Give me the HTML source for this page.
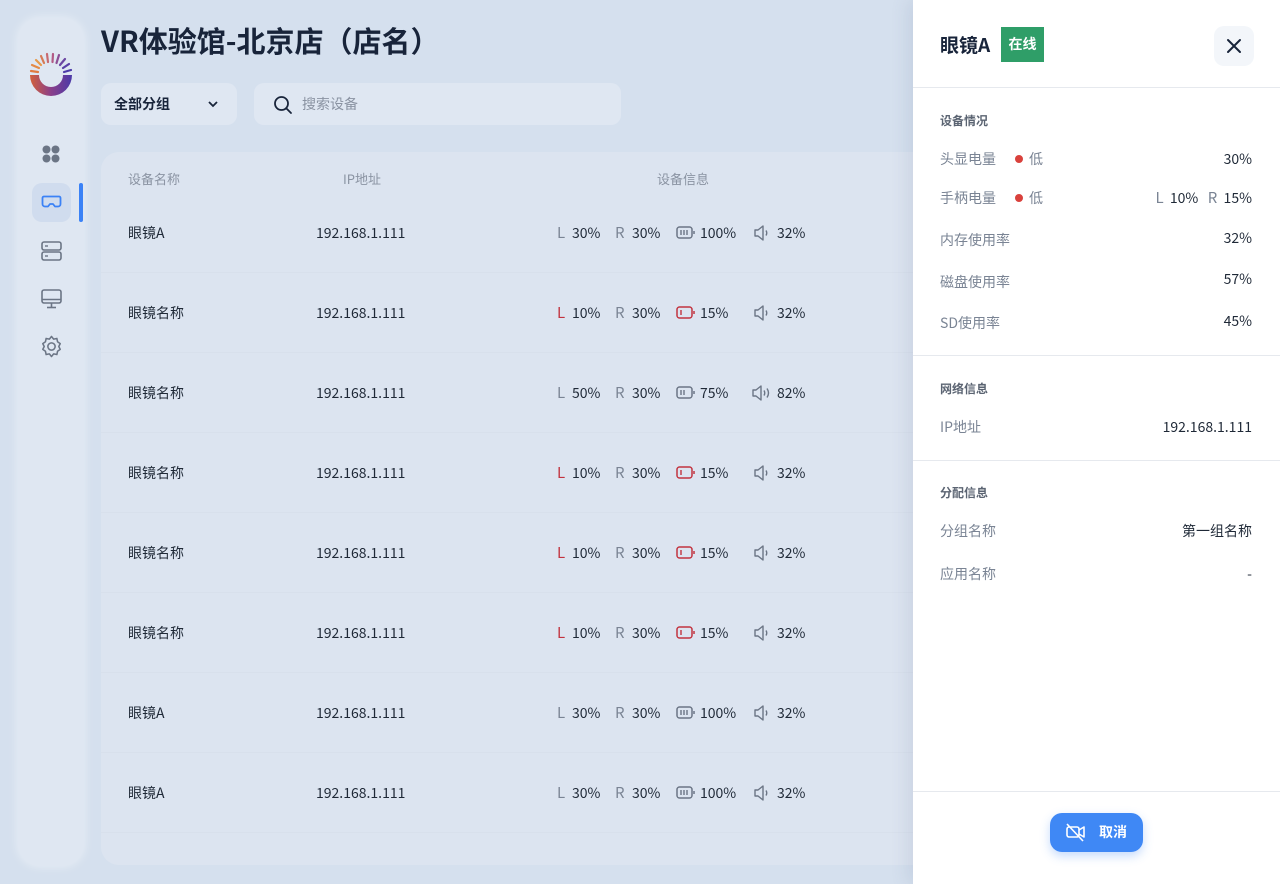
<!DOCTYPE html>
<html><head><meta charset="utf-8"><style>
*{margin:0;padding:0;box-sizing:border-box}
body{width:1280px;height:884px;overflow:hidden;background:#d5e0ee;font-family:"Noto Sans CJK SC","Liberation Sans",sans-serif;color:#1f2937;position:relative}
.abs{position:absolute}
.side{left:18px;top:18px;width:66px;height:848px;border-radius:22px;background:#dfe7f2;box-shadow:0 0 10px rgba(255,255,255,.5)}
.card{left:101px;top:152px;width:830px;height:713px;border-radius:18px;background:#dce4f0}
.t{position:absolute;font-size:14px;line-height:20px;white-space:nowrap}
.g{color:#7a8494}
.red{color:#c2333f}
.panel{left:913px;top:0;width:367px;height:884px;background:#fff;box-shadow:-6px 0 16px rgba(80,100,140,.12)}
.lbl{position:absolute;left:27px;font-size:14px;color:#7a8494;line-height:20px}
.val{position:absolute;right:28px;font-size:14px;color:#1f2937;line-height:20px}
.sec{position:absolute;left:27px;font-size:12px;font-weight:700;color:#5b6472}
.hr{position:absolute;left:0;width:367px;height:1px;background:#e6e9ee}
.dot{display:inline-block;width:8px;height:8px;border-radius:50%;background:#d9413c;margin-right:6px;vertical-align:1px}
</style></head><body>
<div class="abs side"></div>
<svg class="abs" style="left:28px;top:52px" width="46" height="46" viewBox="0 0 46 46">
<defs><linearGradient id="lg" x1="0" x2="1"><stop offset="0" stop-color="#d2603a"/><stop offset=".5" stop-color="#8a3f8a"/><stop offset="1" stop-color="#4b3aa8"/></linearGradient></defs>
<path d="M2 23 A21 21 0 0 0 44 23 L35 23 A12 12 0 0 1 11 23 Z" fill="url(#lg)"/>
<g stroke-width="2.2" stroke-linecap="round">
<line x1="3" y1="19" x2="10" y2="20" stroke="#e07a40"/><line x1="4" y1="13" x2="11" y2="16" stroke="#e48a45"/><line x1="8" y1="8" x2="13" y2="13" stroke="#e79a4a"/><line x1="13" y1="4" x2="16" y2="11" stroke="#d67a55"/><line x1="19" y1="2" x2="20" y2="10" stroke="#c86a70"/><line x1="25" y1="2" x2="24.5" y2="10" stroke="#b25a85"/><line x1="31" y1="3" x2="28.5" y2="11" stroke="#8d4f95"/><line x1="37" y1="7" x2="32" y2="13" stroke="#6c47a3"/><line x1="41" y1="12" x2="35" y2="16" stroke="#5a40a8"/><line x1="43" y1="18" x2="36" y2="20" stroke="#4b3aa8"/>
</g></svg>
<svg class="abs" style="left:42px;top:145px" width="18" height="18"><circle cx="4.5" cy="4.5" r="4" fill="#6b7585"/><circle cx="13.5" cy="4.5" r="4" fill="#6b7585"/><circle cx="4.5" cy="13.5" r="4" fill="#6b7585"/><circle cx="13.5" cy="13.5" r="4" fill="#6b7585"/></svg>
<div class="abs" style="left:32px;top:183px;width:39px;height:39px;border-radius:10px;background:#d0dcee"></div>
<div class="abs" style="left:79px;top:183px;width:4px;height:39px;border-radius:2px;background:#3b82f6"></div>
<svg class="abs" style="left:41px;top:195px" width="21" height="14" viewBox="0 0 21 14"><path d="M3 1.5h15a1.5 1.5 0 0 1 1.5 1.5v6a2.5 2.5 0 0 1-2.5 2.5h-3l-2-2.5h-3l-2 2.5h-3A2.5 2.5 0 0 1 1.5 9V3A1.5 1.5 0 0 1 3 1.5z" fill="none" stroke="#3b82f6" stroke-width="1.8" stroke-linejoin="round"/></svg>
<svg class="abs" style="left:41px;top:241px" width="21" height="20"><rect x="1" y="1" width="19" height="8" rx="2" fill="none" stroke="#6b7585" stroke-width="1.6"/><rect x="1" y="11" width="19" height="8" rx="2" fill="none" stroke="#6b7585" stroke-width="1.6"/><line x1="4" y1="5" x2="7" y2="5" stroke="#6b7585" stroke-width="1.4"/><line x1="4" y1="15" x2="7" y2="15" stroke="#6b7585" stroke-width="1.4"/></svg>
<svg class="abs" style="left:41px;top:289px" width="21" height="20"><rect x="1" y="1" width="19" height="13" rx="2" fill="none" stroke="#6b7585" stroke-width="1.6"/><line x1="1" y1="10.5" x2="20" y2="10.5" stroke="#6b7585" stroke-width="1.4"/><line x1="10.5" y1="14" x2="10.5" y2="18" stroke="#6b7585" stroke-width="1.6"/><line x1="6" y1="18.5" x2="15" y2="18.5" stroke="#6b7585" stroke-width="1.6"/></svg>
<svg class="abs" style="left:40px;top:335px" width="23" height="23" viewBox="0 0 24 24"><path d="M12 1.5l2.2 2.8 3.4-.7.7 3.4 2.8 2L19.6 12l1.5 3-2.8 2-.7 3.4-3.4-.7L12 22.5l-2.2-2.8-3.4.7-.7-3.4-2.8-2L4.4 12 2.9 9l2.8-2 .7-3.4 3.4.7z" fill="none" stroke="#6b7585" stroke-width="1.6" stroke-linejoin="round"/><circle cx="12" cy="12" r="3.8" fill="none" stroke="#6b7585" stroke-width="1.6"/></svg>

<div class="t" style="left:101px;top:20px;font-size:29px;line-height:40px;font-weight:700;color:#18243a">VR体验馆-北京店（店名）</div>
<div class="abs" style="left:101px;top:83px;width:136px;height:42px;border-radius:10px;background:#dfe7f2"></div>
<div class="t" style="left:114px;top:94px;font-weight:700;color:#18243a">全部分组</div>
<svg class="abs" style="left:207px;top:99px" width="12" height="10"><path d="M2 3l4 4 4-4" fill="none" stroke="#18243a" stroke-width="1.8"/></svg>
<div class="abs" style="left:254px;top:83px;width:367px;height:42px;border-radius:10px;background:#dfe7f2"></div>
<svg class="abs" style="left:273px;top:95px" width="20" height="20"><circle cx="8.5" cy="8.5" r="6.5" fill="none" stroke="#18243a" stroke-width="1.8"/><line x1="13.5" y1="13.5" x2="18" y2="18" stroke="#18243a" stroke-width="1.8" stroke-linecap="round"/></svg>
<div class="t g" style="left:302px;top:94px;color:#8a93a2">搜索设备</div>

<div class="abs card"></div>
<div class="t g" style="left:128px;top:169px;font-size:13px;color:#8a93a2">设备名称</div>
<div class="t g" style="left:343px;top:169px;font-size:13px;color:#8a93a2">IP地址</div>
<div class="t g" style="left:657px;top:169px;font-size:13px;color:#8a93a2">设备信息</div>

<div id="rows"></div>
<script>
var d=[["眼镜A",0,"30%","100%",3,0],["眼镜名称",1,"10%","15%",1,0],["眼镜名称",0,"50%","75%",2,1],["眼镜名称",1,"10%","15%",1,0],["眼镜名称",1,"10%","15%",1,0],["眼镜名称",1,"10%","15%",1,0],["眼镜A",0,"30%","100%",3,0],["眼镜A",0,"30%","100%",3,0]];
var h="";
d.forEach(function(r,i){var y=223+i*80;var low=r[1];var bc=low?"#c2333f":"#6b7585";
h+='<div class="abs" style="left:101px;top:'+(y+49)+'px;width:812px;height:1px;background:#d8e0ec"></div>';
h+='<div class="t" style="left:128px;top:'+y+'px">'+r[0]+'</div>';
h+='<div class="t" style="left:316px;top:'+y+'px">192.168.1.111</div>';
h+='<div class="t '+(low?'red':'g')+'" style="left:557px;top:'+y+'px;font-size:15px">L</div>';
h+='<div class="t" style="left:572px;top:'+y+'px">'+r[2]+'</div>';
h+='<div class="t g" style="left:615px;top:'+y+'px;font-size:15px">R</div>';
h+='<div class="t" style="left:632px;top:'+y+'px">30%</div>';
var bars="";for(var k=0;k<r[4];k++)bars+='<line x1="'+(5+k*3)+'" y1="5" x2="'+(5+k*3)+'" y2="10" stroke="'+bc+'" stroke-width="1.4"/>';
h+='<svg class="abs" style="left:676px;top:'+(y+2)+'px" width="20" height="15"><rect x="1" y="2" width="15" height="11" rx="2.5" fill="none" stroke="'+bc+'" stroke-width="1.5"/><line x1="18" y1="6" x2="18" y2="9" stroke="'+bc+'" stroke-width="1.5"/>'+bars+'</svg>';
h+='<div class="t" style="left:700px;top:'+y+'px">'+r[3]+'</div>';
var sx=r[5]?751:753;
h+='<svg class="abs" style="left:'+sx+'px;top:'+(y+1)+'px" width="20" height="18"><path d="M2 6h3l5-4v14l-5-4H2z" fill="none" stroke="#6b7585" stroke-width="1.4" stroke-linejoin="round"/><path d="M13 6.5q1.5 2.5 0 5" fill="none" stroke="#6b7585" stroke-width="1.4"/>'+(r[5]?'<path d="M16 4.5q3 4.5 0 9" fill="none" stroke="#6b7585" stroke-width="1.4"/>':'')+'</svg>';
h+='<div class="t" style="left:777px;top:'+y+'px">'+(r[5]?'82%':'32%')+'</div>';});
document.getElementById("rows").innerHTML=h;
</script>

<div class="abs panel">
<div class="t" style="left:27px;top:32px;font-size:19px;line-height:26px;font-weight:700;color:#18243a">眼镜A</div>
<div class="abs" style="left:88px;top:27px;width:43px;height:35px;background:#2f9e68;color:#fff;font-size:14px;font-weight:700;line-height:35px;text-align:center">在线</div>
<div class="abs" style="left:301px;top:26px;width:40px;height:40px;border-radius:10px;background:#f3f6fa"></div>
<svg class="abs" style="left:313px;top:38px" width="16" height="16"><path d="M2 2l12 12M14 2L2 14" stroke="#18243a" stroke-width="2" stroke-linecap="round"/></svg>
<div class="hr" style="top:87px"></div>
<div class="sec" style="top:112px">设备情况</div>
<div class="lbl" style="top:149px">头显电量</div><div class="t g" style="left:102px;top:149px"><span class="dot"></span>低</div><div class="val" style="top:149px">30%</div>
<div class="lbl" style="top:188px">手柄电量</div><div class="t g" style="left:102px;top:188px"><span class="dot"></span>低</div><div class="val" style="top:188px"><span class="g" style="font-size:15px">L</span>&nbsp; 10% &nbsp; <span class="g" style="font-size:15px">R</span>&nbsp; 15%</div>
<div class="lbl" style="top:230px">内存使用率</div><div class="val" style="top:228px">32%</div>
<div class="lbl" style="top:272px">磁盘使用率</div><div class="val" style="top:269px">57%</div>
<div class="lbl" style="top:313px">SD使用率</div><div class="val" style="top:311px">45%</div>
<div class="hr" style="top:355px"></div>
<div class="sec" style="top:380px">网络信息</div>
<div class="lbl" style="top:417px">IP地址</div><div class="val" style="top:417px">192.168.1.111</div>
<div class="hr" style="top:460px"></div>
<div class="sec" style="top:484px">分配信息</div>
<div class="lbl" style="top:521px">分组名称</div><div class="val" style="top:521px">第一组名称</div>
<div class="lbl" style="top:564px">应用名称</div><div class="val" style="top:564px">-</div>
<div class="hr" style="top:791px"></div>
<div class="abs" style="left:137px;top:813px;width:93px;height:39px;border-radius:12px;background:#3f88f5;box-shadow:0 4px 10px rgba(63,136,245,.3)"></div>
<svg class="abs" style="left:152px;top:822px" width="22" height="20"><rect x="2" y="5" width="12" height="10" rx="2" fill="none" stroke="#fff" stroke-width="1.6"/><path d="M14 8l5-3v10l-5-3" fill="none" stroke="#fff" stroke-width="1.6" stroke-linejoin="round"/><line x1="2" y1="2" x2="18" y2="19" stroke="#fff" stroke-width="1.6"/></svg>
<div class="t" style="left:186px;top:822px;color:#fff;font-weight:700">取消</div>
</div>
</body></html>
